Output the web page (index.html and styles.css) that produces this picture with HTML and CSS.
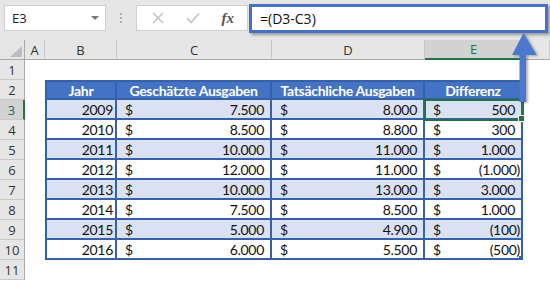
FILE: index.html
```html
<!DOCTYPE html>
<html lang="de">
<head>
    <meta charset="UTF-8">
    <meta name="viewport" content="width=device-width, initial-scale=1.0">
    <title>Differenz</title>
    <link rel="stylesheet" href="styles.css">
</head>
<body>
    <div class="app">
        <div class="toolbar">
            <div class="namebox"><span>E3</span><span class="drop"></span></div>
            <div class="grip"><i></i><i></i><i></i></div>
            <div class="fxbox">
                <svg width="12" height="12" viewBox="0 0 12 12"><path d="M1 1 L11 11 M11 1 L1 11" stroke="#c4c4c4" stroke-width="1.6" fill="none"/></svg>
                <svg width="14" height="12" viewBox="0 0 14 12"><path d="M1 6 L5 10.5 L13 1.5" stroke="#c4c4c4" stroke-width="1.8" fill="none"/></svg>
                <span class="fx">fx</span>
            </div>
            <div class="formula">=(D3-C3)</div>
        </div>

        <div class="sheet">
            <div class="corner"></div>
            <div class="ch">A</div>
            <div class="ch">B</div>
            <div class="ch">C</div>
            <div class="ch">D</div>
            <div class="ch sel">E</div>
            <div class="ch"></div>

            <div class="rh">1</div><div class="blank wide"></div>

            <div class="rh">2</div><div class="blank"></div>
            <div class="tc hd first">Jahr</div>
            <div class="tc hd">Geschätzte Ausgaben</div>
            <div class="tc hd">Tatsächliche Ausgaben</div>
            <div class="tc hd">Differenz</div>
            <div class="blank"></div>

            <div class="rh sel">3</div><div class="blank"></div>
            <div class="tc year first band">2009</div>
            <div class="tc acc band"><span>$</span><span class="pos">7.500</span></div>
            <div class="tc acc band"><span>$</span><span class="pos">8.000</span></div>
            <div class="tc acc band active"><span>$</span><span class="pos">500</span></div>
            <div class="blank"></div>

            <div class="rh">4</div><div class="blank"></div>
            <div class="tc year first">2010</div>
            <div class="tc acc"><span>$</span><span class="pos">8.500</span></div>
            <div class="tc acc"><span>$</span><span class="pos">8.800</span></div>
            <div class="tc acc"><span>$</span><span class="pos">300</span></div>
            <div class="blank"></div>

            <div class="rh">5</div><div class="blank"></div>
            <div class="tc year first band">2011</div>
            <div class="tc acc band"><span>$</span><span class="pos">10.000</span></div>
            <div class="tc acc band"><span>$</span><span class="pos">11.000</span></div>
            <div class="tc acc band"><span>$</span><span class="pos">1.000</span></div>
            <div class="blank"></div>

            <div class="rh">6</div><div class="blank"></div>
            <div class="tc year first">2012</div>
            <div class="tc acc"><span>$</span><span class="pos">12.000</span></div>
            <div class="tc acc"><span>$</span><span class="pos">11.000</span></div>
            <div class="tc acc"><span>$</span><span>(1.000)</span></div>
            <div class="blank"></div>

            <div class="rh">7</div><div class="blank"></div>
            <div class="tc year first band">2013</div>
            <div class="tc acc band"><span>$</span><span class="pos">10.000</span></div>
            <div class="tc acc band"><span>$</span><span class="pos">13.000</span></div>
            <div class="tc acc band"><span>$</span><span class="pos">3.000</span></div>
            <div class="blank"></div>

            <div class="rh">8</div><div class="blank"></div>
            <div class="tc year first">2014</div>
            <div class="tc acc"><span>$</span><span class="pos">7.500</span></div>
            <div class="tc acc"><span>$</span><span class="pos">8.500</span></div>
            <div class="tc acc"><span>$</span><span class="pos">1.000</span></div>
            <div class="blank"></div>

            <div class="rh">9</div><div class="blank"></div>
            <div class="tc year first band">2015</div>
            <div class="tc acc band"><span>$</span><span class="pos">5.000</span></div>
            <div class="tc acc band"><span>$</span><span class="pos">4.900</span></div>
            <div class="tc acc band"><span>$</span><span>(100)</span></div>
            <div class="blank"></div>

            <div class="rh">10</div><div class="blank"></div>
            <div class="tc year first">2016</div>
            <div class="tc acc"><span>$</span><span class="pos">6.000</span></div>
            <div class="tc acc"><span>$</span><span class="pos">5.500</span></div>
            <div class="tc acc last"><span>$</span><span>(500)</span></div>
            <div class="blank"></div>

            <div class="rh">11</div><div class="blank wide"></div>
        </div>

        <!-- arrow from the active cell up to the formula -->
        <svg class="arrow" width="40" height="76" viewBox="0 0 40 76">
            <path d="M18.5 3 L31.5 25 L21 25 L21 72 L14.5 72 L14.5 25 L7 25 Z" fill="#4a78cc"/>
        </svg>
    </div>
</body>
</html>
```

FILE: styles.css
```css
body {
    margin: 0;
    background-color: #fff;
    font-family: "Open Sans", sans-serif;
    overflow: hidden;
}

.app {
    position: relative;
    width: 550px;
    height: 281px;
}

/* formula bar */
.toolbar {
    height: 40px;
    background-color: #e6e6e6;
    display: flex;
    align-items: flex-start;
}

.namebox {
    margin: 5px 0 0 4px;
    width: 102px;
    height: 26px;
    box-sizing: border-box;
    background-color: #fff;
    border: 1px solid #cfcfcf;
    display: flex;
    align-items: center;
    justify-content: space-between;
    padding: 0 6px 0 7px;
    font-size: 13px;
    color: #222;
}

.drop {
    border-left: 4px solid transparent;
    border-right: 4px solid transparent;
    border-top: 4px solid #777;
}

.grip {
    width: 30px;
    height: 36px;
    display: flex;
    flex-direction: column;
    align-items: center;
    justify-content: center;
    gap: 2px;
}

.grip i {
    width: 2px;
    height: 2px;
    background-color: #b0b0b0;
}

.fxbox {
    margin-top: 5px;
    width: 112px;
    height: 26px;
    box-sizing: border-box;
    background-color: #fff;
    border: 1px solid #cfcfcf;
    display: flex;
    align-items: center;
    justify-content: space-around;
    padding: 0 2px 0 4px;
}

.fx {
    font-family: "Liberation Serif", serif;
    font-style: italic;
    font-weight: bold;
    font-size: 15px;
    color: #555;
}

.formula {
    margin: 4px 0 0 1px;
    width: 299px;
    height: 29px;
    box-sizing: border-box;
    border: 3px solid #4472c4;
    background-color: #fff;
    box-shadow: 2px 2px 3px rgba(0, 0, 0, 0.35);
    padding-left: 8px;
    font-size: 14px;
    line-height: 23px;
    color: #111;
}

/* grid */
.sheet {
    display: grid;
    grid-template-columns: 25px 20px 72px 155px 153px 98px 1fr;
    grid-auto-rows: 20px;
}

.corner,
.ch,
.rh {
    background-color: #e6e6e6;
    box-sizing: border-box;
    font-size: 13px;
    color: #333;
    display: flex;
    align-items: center;
    justify-content: center;
}

.corner {
    border-right: 1px solid #a8a8a8;
    border-bottom: 1px solid #a8a8a8;
    position: relative;
}

.corner::after {
    content: "";
    position: absolute;
    right: 2px;
    bottom: 2px;
    border-left: 12px solid transparent;
    border-bottom: 11px solid #bdbdbd;
}

.ch {
    border-right: 1px solid #c8c8c8;
    border-bottom: 1px solid #a8a8a8;
}

.rh {
    border-right: 1px solid #a8a8a8;
    border-bottom: 1px solid #c8c8c8;
}

.ch.sel {
    background-color: #d2d2d2;
    color: #217346;
    border-bottom: 2px solid #217346;
}

.rh.sel {
    background-color: #d2d2d2;
    color: #217346;
    border-right: 2px solid #217346;
}

.blank {
    background-color: #fff;
}

.wide {
    grid-column: 2 / -1;
}

/* table */
.tc {
    box-sizing: border-box;
    border-right: 2px solid #3660a8;
    border-bottom: 2px solid #3660a8;
    font-family: Lato, sans-serif;
    font-size: 14px;
    letter-spacing: -0.3px;
    color: #111;
    display: flex;
    align-items: center;
    background-color: #fff;
}

.tc.first {
    border-left: 2px solid #3660a8;
}

.tc.hd {
    background-color: #4472c4;
    color: #fff;
    font-weight: bold;
    justify-content: center;
    border-top: 2px solid #3660a8;
}

.tc.band {
    background-color: #d9e1f2;
}

.year {
    justify-content: flex-end;
    padding-right: 2px;
}

.acc {
    justify-content: space-between;
    padding: 0 1px 0 8px;
}

.acc .pos {
    padding-right: 5px;
}

.active {
    position: relative;
    outline: 2px solid #217346;
    outline-offset: -1px;
}

.active::after {
    content: "";
    position: absolute;
    right: -4px;
    bottom: -4px;
    width: 5px;
    height: 5px;
    background-color: #217346;
    border: 1px solid #fff;
}

.last {
    position: relative;
}

.last::after {
    content: "";
    position: absolute;
    right: -2px;
    bottom: -2px;
    width: 4px;
    height: 4px;
    background-color: #3660a8;
}

.arrow {
    position: absolute;
    left: 505px;
    top: 30px;
    filter: drop-shadow(2px 1px 1px rgba(0, 0, 0, 0.3));
}
```
